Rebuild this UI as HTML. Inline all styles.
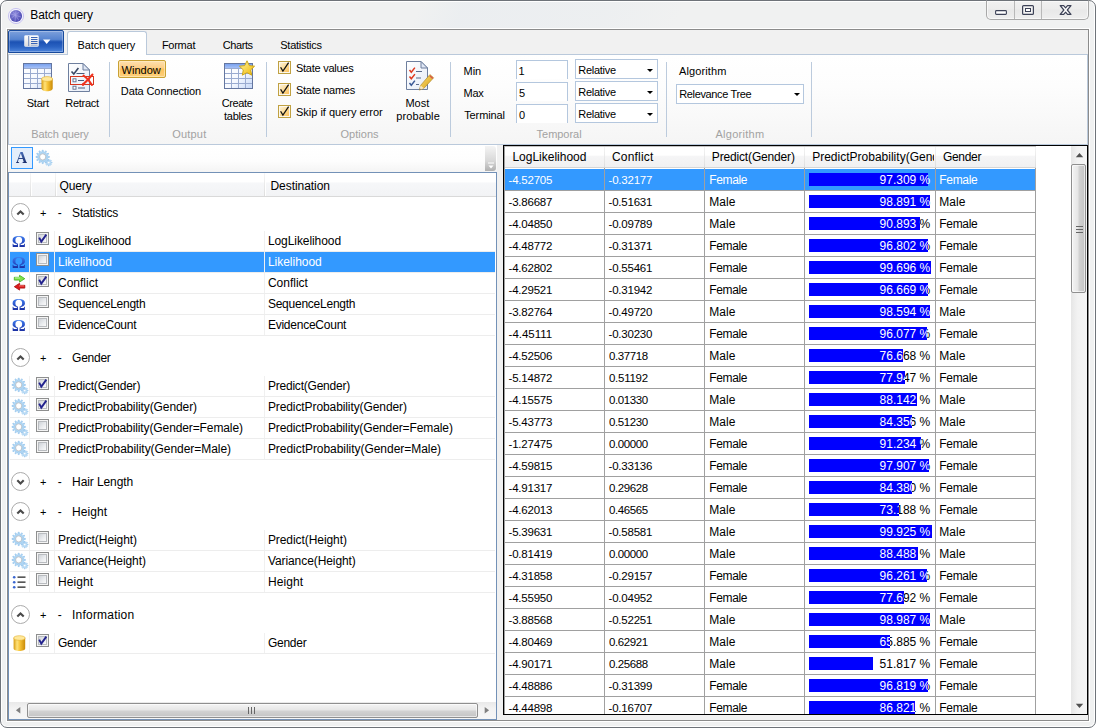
<!DOCTYPE html>
<html lang="en"><head><meta charset="utf-8"><title>Batch query</title>
<style>
html,body{margin:0;padding:0;background:#fff;}
body{width:1096px;height:728px;position:relative;overflow:hidden;font-family:"Liberation Sans",sans-serif;font-size:11px;color:#000;}
.t{position:absolute;white-space:pre;}
.abs{position:absolute;}
svg{position:absolute;overflow:visible;}
.sep{position:absolute;top:62px;height:75px;width:1px;background:#bccbdd;}
.cb{position:absolute;width:11px;height:11px;border:1px solid #8e8f8f;background:linear-gradient(135deg,#d6d9dc 0%,#f4f5f6 60%,#fdfdfd 100%);box-shadow:inset 0 0 0 1px #f4f4f4;}
.cbi{position:absolute;left:1px;top:1px;width:9px;height:9px;box-sizing:border-box;background:linear-gradient(135deg,#cfd3d8 0%,#e9ebee 55%,#fafafa 100%);border:1px solid #b9bcc0;}
.rcb{position:absolute;width:11px;height:11px;border:1px solid #c0a142;background:linear-gradient(135deg,#fdf6e4 0%,#fcd88f 55%,#fbb84c 100%);box-shadow:inset 0 0 0 1px #fdf8ec;}
.tb{position:absolute;background:#fff;border:1px solid #b4c7de;border-bottom:none;box-sizing:border-box;}
.cmb{position:absolute;background:#fff;border:1px solid #b4c7de;box-sizing:border-box;}
.arr{position:absolute;width:0;height:0;border-left:3px solid transparent;border-right:3px solid transparent;border-top:3px solid #000;}
.row{position:absolute;left:10px;width:485px;height:20px;border-bottom:1px solid #ededed;}
.vs{position:absolute;top:0;width:1px;height:20px;background:#f0f0f0;}
.sel{position:absolute;top:0;height:20px;background:#3399ff;}
.gl{position:absolute;background:#a0a0a0;}
.bar{position:absolute;height:13px;background:#0000ff;overflow:hidden;}
.circ{position:absolute;width:17px;height:17px;border:1px solid #ababab;border-radius:50%;background:#fff;}
</style></head><body>

<div class="abs" style="left:0;top:0;width:1094px;height:726px;border:1px solid #6e7379;border-radius:7px;background:#f0f1f1;box-shadow:inset 0 0 0 1px #ffffff;"></div>
<div class="abs" style="left:2px;top:2px;width:1092px;height:27px;background:linear-gradient(115deg,rgba(255,255,255,0) 0%,rgba(255,255,255,0) 38%,rgba(232,236,240,.6) 42%,rgba(232,236,240,.4) 55%,rgba(255,255,255,0) 62%);"></div>
<div style="position:absolute;left:6px;top:28px;width:1082px;height:692px;border:1px solid #fff;"></div>
<div style="position:absolute;left:7px;top:29px;width:1080px;height:690px;border:1px solid #8b8b8b;background:#f1f1f1;"></div>
<svg style="left:8px;top:8px" width="16" height="16" viewBox="0 0 16 16"><defs><radialGradient id="gi" cx="40%" cy="35%" r="70%"><stop offset="0" stop-color="#8f8cdf"/><stop offset="1" stop-color="#4543ad"/></radialGradient></defs>
<circle cx="8" cy="8" r="7.6" fill="#f3f2fd" stroke="#bcb8ee" stroke-width="0.8"/><circle cx="8" cy="8" r="6.1" fill="url(#gi)"/>
<path d="M3 6 L13 9 M5 3.5 L11 12.5 M3.5 10 L11 4 M8 2 L7 14" stroke="#a9a6e6" stroke-width="0.7" fill="none" opacity=".8"/></svg>
<span class="t" style="left:30.30px;top:6.93px;font-size:12px;line-height:16px;color:#000;letter-spacing:-0.141px;text-shadow:0 0 4px #fff,0 0 7px #fff;">Batch query</span>
<div class="abs" style="left:986px;top:0px;width:101px;height:18px;border:1px solid #a8a8a8;border-top:1px solid #6e7379;border-radius:0 0 5px 5px;background:linear-gradient(180deg,#f1f1f1,#ececec 45%,#e8e8e8 50%,#eeeeee);box-shadow:inset 0 0 0 1px rgba(255,255,255,.6);"></div>
<div style="position:absolute;left:1014px;top:1px;width:1px;height:18px;background:#b8b8b8;"></div>
<div style="position:absolute;left:1041px;top:1px;width:1px;height:18px;background:#b8b8b8;"></div>
<svg style="left:994px;top:4px" width="80" height="12" viewBox="0 0 80 12">
<rect x="1.600" y="6.600" width="10.800" height="3.800" rx=".8" fill="#fff" stroke="#3d4257" stroke-width="1.1"/>
<rect x="28.6" y="1.6" width="10.8" height="8.8" rx="1" fill="#f4f4f4" stroke="#3d4257" stroke-width="1.2"/><rect x="31.5" y="4.5" width="5" height="3" fill="#fff" stroke="#3d4257" stroke-width="1"/>
<path d="M66.200 1.600h3.500l1.900 2.300 1.900-2.300h3.500l-3.700 4.400 3.700 4.400h-3.500l-1.900-2.300-1.900 2.300h-3.500l3.700-4.400z" fill="#fff" stroke="#3d4257" stroke-width="1.200" stroke-linejoin="round"/></svg>
<div class="abs" style="left:8px;top:30px;width:54px;height:21px;border:1px solid #184a9c;border-radius:2px 2px 0 0;background:linear-gradient(180deg,#7da0dc 0%,#5684d0 40%,#1c52b4 52%,#2a62c2 75%,#4e86dc 100%);box-shadow:inset 0 0 0 1px rgba(255,255,255,.28);"></div>
<svg style="left:24px;top:35px" width="28" height="13" viewBox="0 0 28 13"><defs><linearGradient id="ab" x1="0" y1="0" x2="0" y2="1"><stop offset="0" stop-color="#fff"/><stop offset="1" stop-color="#dcdcdc"/></linearGradient></defs>
<rect x="0.5" y="0.5" width="14" height="11" rx="1" fill="url(#ab)" stroke="#e8eef8" stroke-width="0.6"/><rect x="4.2" y="1" width="1" height="10" fill="#6a86b8"/>
<path d="M7 2.5h6.500M7 4.500h6.500M7 6.500h6.500M7 8.500h6.500" stroke="#2454b0" stroke-width=".9"/><path d="M7 10.300h6.500" stroke="#7a9ad0" stroke-width=".6"/>
<path d="M19 4.6h7.4l-3.7 4.4z" fill="#fff"/></svg>
<div style="position:absolute;left:8px;top:54px;width:1078px;height:89px;border:1px solid #bac9db;background:linear-gradient(180deg,#ffffff 0%,#fdfdfd 35%,#f5f5f5 100%);"></div>
<div class="abs" style="left:67px;top:31px;width:78px;height:23px;border:1px solid #bac9db;border-bottom:none;border-radius:3px 3px 0 0;background:#fff;"></div>
<span class="t" style="left:77.60px;top:37.86px;font-size:11px;line-height:14px;color:#000;letter-spacing:-0.109px;">Batch query</span>
<span class="t" style="left:161.90px;top:37.86px;font-size:11px;line-height:14px;color:#000;letter-spacing:-0.257px;">Format</span>
<span class="t" style="left:222.80px;top:37.86px;font-size:11px;line-height:14px;color:#000;letter-spacing:-0.418px;">Charts</span>
<span class="t" style="left:280.30px;top:37.86px;font-size:11px;line-height:14px;color:#000;letter-spacing:-0.262px;">Statistics</span>
<div class="sep" style="left:109px"></div>
<div class="sep" style="left:266px"></div>
<div class="sep" style="left:450px"></div>
<div class="sep" style="left:666px"></div>
<div class="sep" style="left:811px"></div>
<span class="t" style="left:31.20px;top:126.86px;font-size:11px;line-height:14px;color:#a2a2a2;letter-spacing:-0.109px;">Batch query</span>
<span class="t" style="left:172.20px;top:126.86px;font-size:11px;line-height:14px;color:#a2a2a2;letter-spacing:0.195px;">Output</span>
<span class="t" style="left:340.40px;top:126.86px;font-size:11px;line-height:14px;color:#a2a2a2;letter-spacing:0.040px;">Options</span>
<span class="t" style="left:536.60px;top:126.86px;font-size:11px;line-height:14px;color:#a2a2a2;letter-spacing:-0.031px;">Temporal</span>
<span class="t" style="left:715.40px;top:126.86px;font-size:11px;line-height:14px;color:#a2a2a2;letter-spacing:0.281px;">Algorithm</span>
<span class="t" style="left:26.70px;top:95.96px;font-size:11px;line-height:14px;color:#000;letter-spacing:-0.207px;">Start</span>
<span class="t" style="left:65.30px;top:95.96px;font-size:11px;line-height:14px;color:#000;letter-spacing:-0.296px;">Retract</span>
<div class="abs" style="left:118px;top:60px;width:46px;height:16px;border:1px solid #c9a133;border-radius:2px;background:linear-gradient(180deg,#fee0b0 0%,#fdcf88 42%,#fdc25c 52%,#fdd07c 100%);box-shadow:inset 0 0 0 1px rgba(255,240,200,.6);"></div>
<span class="t" style="left:121.50px;top:62.86px;font-size:11px;line-height:14px;color:#000;letter-spacing:0.029px;">Window</span>
<span class="t" style="left:120.80px;top:84.06px;font-size:11px;line-height:14px;color:#000;letter-spacing:-0.110px;">Data Connection</span>
<span class="t" style="left:221.80px;top:95.86px;font-size:11px;line-height:14px;color:#000;letter-spacing:-0.405px;">Create</span>
<span class="t" style="left:224.00px;top:108.86px;font-size:11px;line-height:14px;color:#000;letter-spacing:-0.227px;">tables</span>
<div class="rcb" style="left:278px;top:61px"><svg style="left:0;top:0" width="11" height="11" viewBox="0 0 11 11"><path d="M1.6 5.2 L3.9 9 L9.6 0.6" fill="none" stroke="#111" stroke-width="1.25"/></svg></div>
<div class="rcb" style="left:278px;top:83px"><svg style="left:0;top:0" width="11" height="11" viewBox="0 0 11 11"><path d="M1.6 5.2 L3.9 9 L9.6 0.6" fill="none" stroke="#111" stroke-width="1.25"/></svg></div>
<div class="rcb" style="left:278px;top:105px"><svg style="left:0;top:0" width="11" height="11" viewBox="0 0 11 11"><path d="M1.6 5.2 L3.9 9 L9.6 0.6" fill="none" stroke="#111" stroke-width="1.25"/></svg></div>
<span class="t" style="left:296.00px;top:61.16px;font-size:11px;line-height:14px;color:#000;letter-spacing:-0.262px;">State values</span>
<span class="t" style="left:296.00px;top:83.16px;font-size:11px;line-height:14px;color:#000;letter-spacing:-0.261px;">State names</span>
<span class="t" style="left:296.00px;top:105.16px;font-size:11px;line-height:14px;color:#000;letter-spacing:-0.006px;">Skip if query error</span>
<span class="t" style="left:405.40px;top:95.96px;font-size:11px;line-height:14px;color:#000;letter-spacing:0.064px;">Most</span>
<span class="t" style="left:396.30px;top:108.86px;font-size:11px;line-height:14px;color:#000;letter-spacing:0.096px;">probable</span>
<span class="t" style="left:463.60px;top:64.06px;font-size:11px;line-height:14px;color:#000;letter-spacing:-0.045px;">Min</span>
<span class="t" style="left:463.60px;top:86.06px;font-size:11px;line-height:14px;color:#000;letter-spacing:-0.360px;">Max</span>
<span class="t" style="left:464.20px;top:107.76px;font-size:11px;line-height:14px;color:#000;letter-spacing:-0.110px;">Terminal</span>
<div class="tb" style="left:516px;top:60px;width:52px;height:19px"></div>
<span class="t" style="left:518.60px;top:64.36px;font-size:11px;line-height:14px;color:#000;">1</span>
<div class="cmb" style="left:575px;top:59px;width:83px;height:20px"></div>
<span class="t" style="left:578.20px;top:63.16px;font-size:11px;line-height:14px;color:#000;letter-spacing:-0.256px;">Relative</span>
<div class="arr" style="left:647px;top:69px"></div>
<div class="tb" style="left:516px;top:82px;width:52px;height:19px"></div>
<span class="t" style="left:519.00px;top:86.36px;font-size:11px;line-height:14px;color:#000;">5</span>
<div class="cmb" style="left:575px;top:81px;width:83px;height:20px"></div>
<span class="t" style="left:578.20px;top:85.16px;font-size:11px;line-height:14px;color:#000;letter-spacing:-0.256px;">Relative</span>
<div class="arr" style="left:647px;top:91px"></div>
<div class="tb" style="left:516px;top:104px;width:52px;height:19px"></div>
<span class="t" style="left:519.00px;top:108.36px;font-size:11px;line-height:14px;color:#000;">0</span>
<div class="cmb" style="left:575px;top:103px;width:83px;height:20px"></div>
<span class="t" style="left:578.20px;top:107.16px;font-size:11px;line-height:14px;color:#000;letter-spacing:-0.256px;">Relative</span>
<div class="arr" style="left:647px;top:113px"></div>
<span class="t" style="left:679.00px;top:64.26px;font-size:11px;line-height:14px;color:#000;letter-spacing:0.115px;">Algorithm</span>
<div class="cmb" style="left:676px;top:84px;width:128px;height:20px"></div>
<span class="t" style="left:679.20px;top:86.76px;font-size:11px;line-height:14px;color:#000;letter-spacing:-0.346px;">Relevance Tree</span>
<div class="arr" style="left:794px;top:93px"></div>
<svg style="left:0;top:0" width="1096" height="150" viewBox="0 0 1096 150">
<defs>
<linearGradient id="th" x1="0" y1="0" x2="0" y2="1"><stop offset="0" stop-color="#7aa2ee"/><stop offset="1" stop-color="#a4c0f6"/></linearGradient>
<linearGradient id="tc" x1="0" y1="0" x2="1" y2="1"><stop offset="0" stop-color="#ffffff"/><stop offset=".55" stop-color="#f6f9ff"/><stop offset="1" stop-color="#c4d6f6"/></linearGradient>
<linearGradient id="cy" x1="0" y1="0" x2="1" y2="0"><stop offset="0" stop-color="#d79b10"/><stop offset=".3" stop-color="#ffe27a"/><stop offset=".55" stop-color="#f6c236"/><stop offset="1" stop-color="#c98a08"/></linearGradient>
<linearGradient id="dc" x1="0" y1="0" x2="1" y2="1"><stop offset="0" stop-color="#ffffff"/><stop offset="1" stop-color="#e6ecf7"/></linearGradient>
<linearGradient id="st" x1="0" y1="0" x2="1" y2="1"><stop offset="0" stop-color="#fff7a0"/><stop offset="1" stop-color="#f0b400"/></linearGradient>
<linearGradient id="pn" x1="0" y1="0" x2="1" y2="1"><stop offset="0" stop-color="#ffe27a"/><stop offset="1" stop-color="#d49a10"/></linearGradient>
</defs>
<!-- Start: table + cylinder -->
<g>
<rect x="23.5" y="63.5" width="28" height="25" fill="url(#tc)" stroke="#6476a0"/>
<rect x="24" y="64" width="27" height="4" fill="url(#th)"/>
<path d="M24 68.5h27M24 73.5h27M24 78.5h27M24 83.5h27M30.5 68v20M37.5 68v20M44.5 68v20" stroke="#9aabd0" stroke-width="1" fill="none"/>
<path d="M41.5 79v9.5c0 1.6 2.5 2.8 5.6 2.8s5.6-1.2 5.6-2.8V79z" fill="url(#cy)"/>
<ellipse cx="47.1" cy="79" rx="5.6" ry="2.4" fill="#ffe89a" stroke="#e0ae2c" stroke-width=".6"/>
</g>
<!-- Retract: doc + red x -->
<g>
<path d="M68.5 63.5h14.5l6.5 6.5v21.5h-21z" fill="url(#dc)" stroke="#6e7f9e"/>
<path d="M83 63.5v6.5h6.5z" fill="#dfe7f5" stroke="#6e7f9e" stroke-linejoin="round"/>
<path d="M71.5 71.5l2.3 2.6 4.6-6" stroke="#3b4a66" stroke-width="1.6" fill="none"/>
<path d="M76.5 73.5h8" stroke="#4b5c7c" stroke-width="1"/>
<rect x="70.500" y="76.500" width="23" height="8" fill="none" stroke="#d4371f" stroke-width="1"/>
<rect x="73" y="78.8" width="3" height="3" fill="#fff" stroke="#5b6c8c" stroke-width=".9"/>
<path d="M78 80.5h6" stroke="#4b5c7c" stroke-width="1"/>
<rect x="73" y="86.2" width="3" height="3" fill="#fff" stroke="#5b6c8c" stroke-width=".9"/>
<path d="M78 88h7" stroke="#4b5c7c" stroke-width="1"/>
<path d="M83.5 75.5c3 2 6 5 8.5 9.5M92.5 74.5c-3 3.5-6 7-9.5 9.8" stroke="#f0321e" stroke-width="2" fill="none" stroke-linecap="round"/>
<circle cx="83" cy="84.6" r="1.3" fill="#f0321e"/>
</g>
<!-- Create tables: table + star -->
<g>
<rect x="224.5" y="63.5" width="28" height="25" fill="url(#tc)" stroke="#6476a0"/>
<rect x="225" y="64" width="27" height="4" fill="url(#th)"/>
<path d="M225 68.5h27M225 73.5h27M225 78.5h27M225 83.5h27M231.500 68v20M238.5 68v20M245.5 68v20" stroke="#9aabd0" stroke-width="1" fill="none"/>
<path d="M247 60.8l2.3 4.8 5.3.6-3.9 3.7 1 5.3-4.7-2.6-4.7 2.6 1-5.300-3.900-3.700 5.300-.600z" fill="url(#st)" stroke="#c9a210" stroke-width=".9" stroke-linejoin="round"/>
</g>
<!-- Most probable: doc + red checks + pencil -->
<g>
<path d="M406.500 61.5h14.500l6.500 6.500v21.500h-21z" fill="url(#dc)" stroke="#6e7f9e"/>
<path d="M421 61.500v6.500h6.500z" fill="#dfe7f5" stroke="#6e7f9e" stroke-linejoin="round"/>
<path d="M409.5 70l1.800 2.200 3.600-4.600" stroke="#e03a20" stroke-width="1.500" fill="none"/>
<path d="M409.5 76.500l1.800 2.200 3.600-4.600" stroke="#e03a20" stroke-width="1.500" fill="none"/>
<path d="M409.500 83l1.800 2.200 3.600-4.600" stroke="#3b5a96" stroke-width="1.500" fill="none"/>
<path d="M416 71.500h6M416 78h5M416 84.500h3" stroke="#5b6c8c" stroke-width="1"/>
<path d="M429.900 74.600l3.700 3.200-9.700 10.500-4.600 1.800 1.300-4.700z" fill="url(#pn)" stroke="#b08a28" stroke-width=".7" stroke-linejoin="round"/>
<path d="M429.3 76.300l1-1.100 3 2.600-1 1.100z" fill="#d8584a"/>
<path d="M420.600 85.400l-1.300 4.700 4.600-1.800z" fill="#f6e6c4"/><path d="M419.300 90.100l.5-1.700 1.200 1.100z" fill="#444"/>
</g>
</svg>
<div style="position:absolute;left:8px;top:145px;width:489px;height:27px;background:linear-gradient(180deg,#ffffff 0%,#fdfdfd 60%,#f4f4f4 100%);"></div>
<div class="abs" style="left:11px;top:147px;width:20px;height:20px;border:1px solid #3399ff;background:#e4eefb;"></div>
<span class="t" style="left:15.70px;top:147.41px;font-size:16px;line-height:21px;color:transparent;font-family:'Liberation Serif',serif;font-weight:bold;background:linear-gradient(180deg,#4065b0 30%,#1c2f6c 75%);-webkit-background-clip:text;background-clip:text;">A</span>
<div class="abs" style="left:485px;top:146px;width:11px;height:25px;border-radius:0 3px 3px 0;background:linear-gradient(180deg,#f4f4f4 0%,#d8d8d8 60%,#b0b0b0 100%);"></div>
<svg style="left:487px;top:162px" width="8" height="8" viewBox="0 0 8 8"><path d="M1 1h6" stroke="#fff" stroke-width="1"/><path d="M1.5 3.5h5l-2.500 3z" fill="#fff"/></svg>
<svg width="0" height="0" style="left:0;top:0"><defs>
<g id="gear">
<path d="M14.96 12.17L16.08 12.20L16.08 13.00L14.96 13.03L14.60 13.89L15.37 14.70L14.80 15.27L13.99 14.50L13.13 14.86L13.10 15.98L12.30 15.98L12.27 14.86L11.41 14.50L10.60 15.27L10.03 14.70L10.80 13.89L10.44 13.03L9.32 13.00L9.32 12.20L10.44 12.17L10.80 11.31L10.03 10.50L10.60 9.93L11.41 10.70L12.27 10.34L12.30 9.22L13.10 9.22L13.13 10.34L13.99 10.70L14.80 9.93L15.37 10.50L14.60 11.31z" fill="#c2e0f7" stroke="#93c4ec" stroke-width=".6" stroke-linejoin="round"/>
<circle cx="12.700" cy="12.600" r="1.200" fill="#fff" stroke="#9ccaee" stroke-width=".5"/>
<path d="M11.56 6.29L13.38 6.37L13.38 7.43L11.56 7.51L11.22 8.80L12.75 9.78L12.22 10.69L10.60 9.86L9.66 10.80L10.49 12.42L9.58 12.95L8.60 11.42L7.31 11.76L7.23 13.58L6.17 13.58L6.09 11.76L4.80 11.42L3.82 12.95L2.91 12.42L3.74 10.80L2.80 9.86L1.18 10.69L0.65 9.78L2.18 8.80L1.84 7.51L0.02 7.43L0.02 6.37L1.84 6.29L2.18 5.00L0.65 4.02L1.18 3.11L2.80 3.94L3.74 3.00L2.91 1.38L3.82 0.85L4.80 2.38L6.09 2.04L6.17 0.22L7.23 0.22L7.31 2.04L8.60 2.38L9.58 0.85L10.49 1.38L9.66 3.00L10.60 3.94L12.22 3.11L12.75 4.02L11.22 5.00z" fill="#bcdcf6" stroke="#8fc2eb" stroke-width=".7" stroke-linejoin="round"/>
<circle cx="6.700" cy="6.900" r="4.100" fill="none" stroke="#a6d2f3" stroke-width=".9"/>
<circle cx="6.700" cy="6.900" r="3.100" fill="#fff" stroke="#a8adb4" stroke-width=".7"/>
</g>
<linearGradient id="cy2" x1="0" y1="0" x2="1" y2="0"><stop offset="0" stop-color="#d79b10"/><stop offset=".3" stop-color="#ffe27a"/><stop offset=".55" stop-color="#f6c236"/><stop offset="1" stop-color="#c98a08"/></linearGradient>
<linearGradient id="om" x1="0" y1="0" x2="0" y2="1"><stop offset="0" stop-color="#4f86ee"/><stop offset="1" stop-color="#1d3fa4"/></linearGradient>
</defs></svg>
<svg style="left:36px;top:150px" width="16" height="16" viewBox="0 0 16 16"><use href="#gear"/></svg>
<div style="position:absolute;left:8px;top:172px;width:487px;height:546px;border:1px solid #7391b7;background:#fff;"></div>
<div style="position:absolute;left:9px;top:173px;width:487px;height:23px;background:linear-gradient(180deg,#ffffff 0%,#ffffff 38%,#f6f7f9 44%,#f2f3f5 100%);border-bottom:1px solid #d9d9d9;"></div>
<div style="position:absolute;left:30px;top:173px;width:1px;height:23px;background:linear-gradient(180deg,#f6f6f6,#dedede);"></div>
<div style="position:absolute;left:31px;top:173px;width:1px;height:23px;background:#fff;"></div>
<div style="position:absolute;left:55px;top:173px;width:1px;height:23px;background:linear-gradient(180deg,#f6f6f6,#dedede);"></div>
<div style="position:absolute;left:56px;top:173px;width:1px;height:23px;background:#fff;"></div>
<div style="position:absolute;left:264px;top:173px;width:1px;height:23px;background:linear-gradient(180deg,#f6f6f6,#dedede);"></div>
<div style="position:absolute;left:265px;top:173px;width:1px;height:23px;background:#fff;"></div>
<span class="t" style="left:59.40px;top:177.83px;font-size:12px;line-height:16px;color:#000;letter-spacing:-0.097px;">Query</span>
<span class="t" style="left:270.50px;top:177.83px;font-size:12px;line-height:16px;color:#000;letter-spacing:-0.050px;">Destination</span>
<div class="circ" style="left:11px;top:202.5px"></div>
<svg style="left:11px;top:202.5px" width="19" height="19" viewBox="0 0 19 19"><path d="M6.300 11.600 L9.500 8.400 L12.700 11.600" fill="none" stroke="#4a4a4a" stroke-width="2.100"/></svg>
<span class="t" style="left:39.90px;top:206.26px;font-size:11px;line-height:14px;color:#000;">+</span>
<span class="t" style="left:57.70px;top:204.63px;font-size:12px;line-height:16px;color:#000;">-</span>
<span class="t" style="left:72.10px;top:204.83px;font-size:12px;line-height:16px;color:#000;letter-spacing:-0.212px;">Statistics</span>
<div class="row" style="top:231px">
<div class="vs" style="left:19px"></div><div class="vs" style="left:44px"></div><div class="vs" style="left:254px"></div></div>
<span class="t" style="left:11.80px;top:229.52px;font-size:17.5px;line-height:23px;color:transparent;font-family:'Liberation Serif',serif;font-weight:bold;background:linear-gradient(180deg,#3f7cec 25%,#2a55cc 50%,#18289a 78%);-webkit-background-clip:text;background-clip:text;">Ω</span>
<div class="cb" style="left:36px;top:232px"><div class="cbi"></div><svg style="left:0;top:0" width="11" height="11" viewBox="0 0 11 11"><path d="M2.200 4.600 L4.300 8.600 L9.300 1.600" fill="none" stroke="#23238e" stroke-width="1.900"/></svg></div>
<span class="t" style="left:58.00px;top:232.63px;font-size:12px;line-height:16px;color:#000;letter-spacing:-0.074px;">LogLikelihood</span>
<span class="t" style="left:267.90px;top:232.63px;font-size:12px;line-height:16px;color:#000;letter-spacing:-0.074px;">LogLikelihood</span>
<div class="row" style="top:252px">
<div class="sel" style="left:0px;width:19px"></div><div class="sel" style="left:20px;width:24px"></div><div class="sel" style="left:45px;width:209px"></div><div class="sel" style="left:255px;width:230px"></div>
<div class="vs" style="left:19px"></div><div class="vs" style="left:44px"></div><div class="vs" style="left:254px"></div></div>
<span class="t" style="left:11.80px;top:250.52px;font-size:17.5px;line-height:23px;color:transparent;font-family:'Liberation Serif',serif;font-weight:bold;background:linear-gradient(180deg,#3f7cec 25%,#2a55cc 50%,#18289a 78%);-webkit-background-clip:text;background-clip:text;">Ω</span>
<div class="cb" style="left:36px;top:253px"><div class="cbi"></div></div>
<span class="t" style="left:58.00px;top:253.63px;font-size:12px;line-height:16px;color:#fff;letter-spacing:-0.015px;">Likelihood</span>
<span class="t" style="left:267.90px;top:253.63px;font-size:12px;line-height:16px;color:#fff;letter-spacing:-0.015px;">Likelihood</span>
<div class="row" style="top:273px">
<div class="vs" style="left:19px"></div><div class="vs" style="left:44px"></div><div class="vs" style="left:254px"></div></div>
<svg style="left:11px;top:273.3px" width="18" height="18" viewBox="0 0 18 18"><path d="M3.300 4.300h5.200v-2l5.300 3.400-5.300 3.400v-2h-5.200z" fill="#7fe04a" stroke="#3fb01c" stroke-width=".8" stroke-linejoin="round"/><path d="M4 4.900h5" stroke="#d8ffc0" stroke-width=".8"/><path d="M13.800 12.300h-5.200v-2l-5.300 3.400 5.300 3.400v-2h5.200z" fill="#dc1c1c" stroke="#a80c0c" stroke-width=".8" stroke-linejoin="round"/><path d="M8 12.900h5" stroke="#ff8a80" stroke-width=".8"/></svg>
<div class="cb" style="left:36px;top:274px"><div class="cbi"></div><svg style="left:0;top:0" width="11" height="11" viewBox="0 0 11 11"><path d="M2.200 4.600 L4.300 8.600 L9.300 1.600" fill="none" stroke="#23238e" stroke-width="1.900"/></svg></div>
<span class="t" style="left:58.00px;top:274.63px;font-size:12px;line-height:16px;color:#000;letter-spacing:-0.002px;">Conflict</span>
<span class="t" style="left:267.90px;top:274.63px;font-size:12px;line-height:16px;color:#000;letter-spacing:-0.002px;">Conflict</span>
<div class="row" style="top:294px">
<div class="vs" style="left:19px"></div><div class="vs" style="left:44px"></div><div class="vs" style="left:254px"></div></div>
<span class="t" style="left:11.80px;top:292.52px;font-size:17.5px;line-height:23px;color:transparent;font-family:'Liberation Serif',serif;font-weight:bold;background:linear-gradient(180deg,#3f7cec 25%,#2a55cc 50%,#18289a 78%);-webkit-background-clip:text;background-clip:text;">Ω</span>
<div class="cb" style="left:36px;top:295px"><div class="cbi"></div></div>
<span class="t" style="left:58.00px;top:295.63px;font-size:12px;line-height:16px;color:#000;letter-spacing:-0.239px;">SequenceLength</span>
<span class="t" style="left:267.90px;top:295.63px;font-size:12px;line-height:16px;color:#000;letter-spacing:-0.239px;">SequenceLength</span>
<div class="row" style="top:315px">
<div class="vs" style="left:19px"></div><div class="vs" style="left:44px"></div><div class="vs" style="left:254px"></div></div>
<span class="t" style="left:11.80px;top:313.52px;font-size:17.5px;line-height:23px;color:transparent;font-family:'Liberation Serif',serif;font-weight:bold;background:linear-gradient(180deg,#3f7cec 25%,#2a55cc 50%,#18289a 78%);-webkit-background-clip:text;background-clip:text;">Ω</span>
<div class="cb" style="left:36px;top:316px"><div class="cbi"></div></div>
<span class="t" style="left:58.00px;top:316.63px;font-size:12px;line-height:16px;color:#000;letter-spacing:-0.238px;">EvidenceCount</span>
<span class="t" style="left:267.90px;top:316.63px;font-size:12px;line-height:16px;color:#000;letter-spacing:-0.238px;">EvidenceCount</span>
<div class="circ" style="left:11px;top:347.5px"></div>
<svg style="left:11px;top:347.5px" width="19" height="19" viewBox="0 0 19 19"><path d="M6.300 11.600 L9.500 8.400 L12.700 11.600" fill="none" stroke="#4a4a4a" stroke-width="2.100"/></svg>
<span class="t" style="left:39.90px;top:351.26px;font-size:11px;line-height:14px;color:#000;">+</span>
<span class="t" style="left:57.70px;top:349.63px;font-size:12px;line-height:16px;color:#000;">-</span>
<span class="t" style="left:72.10px;top:349.83px;font-size:12px;line-height:16px;color:#000;letter-spacing:-0.255px;">Gender</span>
<div class="row" style="top:376px">
<div class="vs" style="left:19px"></div><div class="vs" style="left:44px"></div><div class="vs" style="left:254px"></div></div>
<svg style="left:12px;top:378px" width="16" height="16" viewBox="0 0 16 16"><use href="#gear"/></svg>
<div class="cb" style="left:36px;top:377px"><div class="cbi"></div><svg style="left:0;top:0" width="11" height="11" viewBox="0 0 11 11"><path d="M2.200 4.600 L4.300 8.600 L9.300 1.600" fill="none" stroke="#23238e" stroke-width="1.900"/></svg></div>
<span class="t" style="left:58.00px;top:377.63px;font-size:12px;line-height:16px;color:#000;letter-spacing:-0.212px;">Predict(Gender)</span>
<span class="t" style="left:267.90px;top:377.63px;font-size:12px;line-height:16px;color:#000;letter-spacing:-0.212px;">Predict(Gender)</span>
<div class="row" style="top:397px">
<div class="vs" style="left:19px"></div><div class="vs" style="left:44px"></div><div class="vs" style="left:254px"></div></div>
<svg style="left:12px;top:399px" width="16" height="16" viewBox="0 0 16 16"><use href="#gear"/></svg>
<div class="cb" style="left:36px;top:398px"><div class="cbi"></div><svg style="left:0;top:0" width="11" height="11" viewBox="0 0 11 11"><path d="M2.200 4.600 L4.300 8.600 L9.300 1.600" fill="none" stroke="#23238e" stroke-width="1.900"/></svg></div>
<span class="t" style="left:58.00px;top:398.63px;font-size:12px;line-height:16px;color:#000;letter-spacing:-0.093px;">PredictProbability(Gender)</span>
<span class="t" style="left:267.90px;top:398.63px;font-size:12px;line-height:16px;color:#000;letter-spacing:-0.093px;">PredictProbability(Gender)</span>
<div class="row" style="top:418px">
<div class="vs" style="left:19px"></div><div class="vs" style="left:44px"></div><div class="vs" style="left:254px"></div></div>
<svg style="left:12px;top:420px" width="16" height="16" viewBox="0 0 16 16"><use href="#gear"/></svg>
<div class="cb" style="left:36px;top:419px"><div class="cbi"></div></div>
<span class="t" style="left:58.00px;top:419.63px;font-size:12px;line-height:16px;color:#000;letter-spacing:-0.107px;">PredictProbability(Gender=Female)</span>
<span class="t" style="left:267.90px;top:419.63px;font-size:12px;line-height:16px;color:#000;letter-spacing:-0.107px;">PredictProbability(Gender=Female)</span>
<div class="row" style="top:439px">
<div class="vs" style="left:19px"></div><div class="vs" style="left:44px"></div><div class="vs" style="left:254px"></div></div>
<svg style="left:12px;top:441px" width="16" height="16" viewBox="0 0 16 16"><use href="#gear"/></svg>
<div class="cb" style="left:36px;top:440px"><div class="cbi"></div></div>
<span class="t" style="left:58.00px;top:440.63px;font-size:12px;line-height:16px;color:#000;letter-spacing:-0.043px;">PredictProbability(Gender=Male)</span>
<span class="t" style="left:267.90px;top:440.63px;font-size:12px;line-height:16px;color:#000;letter-spacing:-0.043px;">PredictProbability(Gender=Male)</span>
<div class="circ" style="left:11px;top:471.5px"></div>
<svg style="left:11px;top:471.5px" width="19" height="19" viewBox="0 0 19 19"><path d="M6.300 8.200 L9.500 11.400 L12.700 8.200" fill="none" stroke="#4a4a4a" stroke-width="2.100"/></svg>
<span class="t" style="left:39.90px;top:475.26px;font-size:11px;line-height:14px;color:#000;">+</span>
<span class="t" style="left:57.70px;top:473.63px;font-size:12px;line-height:16px;color:#000;">-</span>
<span class="t" style="left:72.10px;top:473.83px;font-size:12px;line-height:16px;color:#000;letter-spacing:-0.095px;">Hair Length</span>
<div class="circ" style="left:11px;top:501.5px"></div>
<svg style="left:11px;top:501.5px" width="19" height="19" viewBox="0 0 19 19"><path d="M6.300 11.600 L9.500 8.400 L12.700 11.600" fill="none" stroke="#4a4a4a" stroke-width="2.100"/></svg>
<span class="t" style="left:39.90px;top:505.26px;font-size:11px;line-height:14px;color:#000;">+</span>
<span class="t" style="left:57.70px;top:503.63px;font-size:12px;line-height:16px;color:#000;">-</span>
<span class="t" style="left:72.10px;top:503.83px;font-size:12px;line-height:16px;color:#000;letter-spacing:0.085px;">Height</span>
<div class="row" style="top:530px">
<div class="vs" style="left:19px"></div><div class="vs" style="left:44px"></div><div class="vs" style="left:254px"></div></div>
<svg style="left:12px;top:532px" width="16" height="16" viewBox="0 0 16 16"><use href="#gear"/></svg>
<div class="cb" style="left:36px;top:531px"><div class="cbi"></div></div>
<span class="t" style="left:58.00px;top:531.63px;font-size:12px;line-height:16px;color:#000;letter-spacing:-0.069px;">Predict(Height)</span>
<span class="t" style="left:267.90px;top:531.63px;font-size:12px;line-height:16px;color:#000;letter-spacing:-0.069px;">Predict(Height)</span>
<div class="row" style="top:551px">
<div class="vs" style="left:19px"></div><div class="vs" style="left:44px"></div><div class="vs" style="left:254px"></div></div>
<svg style="left:12px;top:553px" width="16" height="16" viewBox="0 0 16 16"><use href="#gear"/></svg>
<div class="cb" style="left:36px;top:552px"><div class="cbi"></div></div>
<span class="t" style="left:58.00px;top:552.63px;font-size:12px;line-height:16px;color:#000;letter-spacing:-0.079px;">Variance(Height)</span>
<span class="t" style="left:267.90px;top:552.63px;font-size:12px;line-height:16px;color:#000;letter-spacing:-0.079px;">Variance(Height)</span>
<div class="row" style="top:572px">
<div class="vs" style="left:19px"></div><div class="vs" style="left:44px"></div><div class="vs" style="left:254px"></div></div>
<svg style="left:12px;top:573px" width="16" height="18" viewBox="0 0 16 18"><g fill="#3a66d0"><circle cx="2.200" cy="4.200" r="1.300"/><circle cx="2.200" cy="9.200" r="1.300"/><circle cx="2.200" cy="14.200" r="1.300"/></g><path d="M5.500 4.200h8M5.500 9.200h8M5.500 14.200h8" stroke="#222" stroke-width="1.300"/></svg>
<div class="cb" style="left:36px;top:573px"><div class="cbi"></div></div>
<span class="t" style="left:58.00px;top:573.63px;font-size:12px;line-height:16px;color:#000;letter-spacing:0.085px;">Height</span>
<span class="t" style="left:267.90px;top:573.63px;font-size:12px;line-height:16px;color:#000;letter-spacing:0.085px;">Height</span>
<div class="circ" style="left:11px;top:604.5px"></div>
<svg style="left:11px;top:604.5px" width="19" height="19" viewBox="0 0 19 19"><path d="M6.300 11.600 L9.500 8.400 L12.700 11.600" fill="none" stroke="#4a4a4a" stroke-width="2.100"/></svg>
<span class="t" style="left:39.90px;top:608.26px;font-size:11px;line-height:14px;color:#000;">+</span>
<span class="t" style="left:57.70px;top:606.63px;font-size:12px;line-height:16px;color:#000;">-</span>
<span class="t" style="left:72.10px;top:606.83px;font-size:12px;line-height:16px;color:#000;letter-spacing:0.197px;">Information</span>
<div class="row" style="top:633px">
<div class="vs" style="left:19px"></div><div class="vs" style="left:44px"></div><div class="vs" style="left:254px"></div></div>
<svg style="left:13px;top:635px" width="13" height="17" viewBox="0 0 13 17"><path d="M.6 3v10.500c0 1.400 2.600 2.500 5.800 2.500s5.800-1.100 5.800-2.500V3z" fill="url(#cy2)"/><ellipse cx="6.400" cy="3" rx="5.800" ry="2.300" fill="#ffe89a" stroke="#e0ae2c" stroke-width=".6"/></svg>
<div class="cb" style="left:36px;top:634px"><div class="cbi"></div><svg style="left:0;top:0" width="11" height="11" viewBox="0 0 11 11"><path d="M2.200 4.600 L4.300 8.600 L9.300 1.600" fill="none" stroke="#23238e" stroke-width="1.900"/></svg></div>
<span class="t" style="left:58.00px;top:634.63px;font-size:12px;line-height:16px;color:#000;letter-spacing:-0.255px;">Gender</span>
<span class="t" style="left:267.90px;top:634.63px;font-size:12px;line-height:16px;color:#000;letter-spacing:-0.255px;">Gender</span>
<div style="position:absolute;left:9px;top:702px;width:487px;height:17px;background:linear-gradient(180deg,#e9e9e9,#f3f3f3 40%,#f6f6f6);"></div>
<div class="abs" style="left:27px;top:703px;width:449px;height:13px;border:1px solid #8f8f8f;border-radius:2px;background:linear-gradient(180deg,#f4f4f4 0%,#e6e6e6 45%,#d2d2d2 55%,#c4c4c4 100%);box-shadow:inset 0 0 0 1px rgba(255,255,255,.6);"></div>
<svg style="left:9px;top:702px" width="487" height="17" viewBox="0 0 487 17"><path d="M11.300 5v6.600l-4.400-3.300z" fill="#808080"/><path d="M475.700 5v6.600l4.400-3.300z" fill="#808080"/><path d="M239.500 5v7M242.500 5v7M245.500 5v7" stroke="#666" stroke-width="1"/></svg>
<div style="position:absolute;left:503px;top:145px;width:583px;height:568px;border:1px solid #000;background:#fff;"></div>
<div style="position:absolute;left:504px;top:146px;width:1px;height:568px;background:#a0a0a0;"></div>
<div style="position:absolute;left:505px;top:146px;width:531px;height:1px;background:#c4c4c4;"></div>
<div style="position:absolute;left:505px;top:147px;width:531px;height:20px;background:linear-gradient(180deg,#ffffff 0%,#ffffff 40%,#f5f5f6 48%,#f0f0f1 100%);border-bottom:1px solid #d5d5d5;"></div>
<div style="position:absolute;left:604px;top:147px;width:1px;height:20px;background:linear-gradient(180deg,#f4f4f4,#dedede);"></div>
<div style="position:absolute;left:604px;top:168px;width:1px;height:546px;background:#a0a0a0;"></div>
<div style="position:absolute;left:704px;top:147px;width:1px;height:20px;background:linear-gradient(180deg,#f4f4f4,#dedede);"></div>
<div style="position:absolute;left:704px;top:168px;width:1px;height:546px;background:#a0a0a0;"></div>
<div style="position:absolute;left:804px;top:147px;width:1px;height:20px;background:linear-gradient(180deg,#f4f4f4,#dedede);"></div>
<div style="position:absolute;left:804px;top:168px;width:1px;height:546px;background:#a0a0a0;"></div>
<div style="position:absolute;left:935px;top:147px;width:1px;height:20px;background:linear-gradient(180deg,#f4f4f4,#dedede);"></div>
<div style="position:absolute;left:935px;top:168px;width:1px;height:546px;background:#a0a0a0;"></div>
<div style="position:absolute;left:1035px;top:147px;width:1px;height:20px;background:linear-gradient(180deg,#f4f4f4,#dedede);"></div>
<div style="position:absolute;left:1035px;top:168px;width:1px;height:546px;background:#a0a0a0;"></div>
<span class="t" style="left:512.40px;top:149.43px;font-size:12px;line-height:16px;color:#000;letter-spacing:-0.005px;">LogLikelihood</span>
<span class="t" style="left:612.00px;top:149.43px;font-size:12px;line-height:16px;color:#000;letter-spacing:0.173px;">Conflict</span>
<span class="t" style="left:711.80px;top:149.43px;font-size:12px;line-height:16px;color:#000;letter-spacing:-0.158px;">Predict(Gender)</span>
<div class="abs" style="left:805px;top:146px;width:129px;height:21px;overflow:hidden">
<span class="t" style="left:7.20px;top:3.43px;font-size:12px;line-height:16px;color:#000;letter-spacing:0.004px;">PredictProbability(Gender)</span>
</div>
<span class="t" style="left:942.90px;top:149.43px;font-size:12px;line-height:16px;color:#000;letter-spacing:-0.305px;">Gender</span>
<div style="position:absolute;left:505px;top:169px;width:99px;height:21px;background:#3399ff;"></div>
<div style="position:absolute;left:605px;top:169px;width:99px;height:21px;background:#3399ff;"></div>
<div style="position:absolute;left:705px;top:169px;width:99px;height:21px;background:#3399ff;"></div>
<div style="position:absolute;left:805px;top:169px;width:130px;height:21px;background:#3399ff;"></div>
<div style="position:absolute;left:936px;top:169px;width:99px;height:21px;background:#3399ff;"></div>
<div style="position:absolute;left:505px;top:190px;width:531px;height:1px;background:#a0a0a0;"></div>
<span class="t" style="left:508.60px;top:172.90px;font-size:11.5px;line-height:15px;color:#fff;letter-spacing:-0.226px;">-4.52705</span>
<span class="t" style="left:608.60px;top:172.90px;font-size:11.5px;line-height:15px;color:#fff;letter-spacing:-0.226px;">-0.32177</span>
<span class="t" style="left:709.20px;top:172.23px;font-size:12px;line-height:16px;color:#fff;letter-spacing:-0.336px;">Female</span>
<span class="t" style="left:939.30px;top:172.23px;font-size:12px;line-height:16px;color:#fff;letter-spacing:-0.336px;">Female</span>
<span class="t" style="left:879.59px;top:172.23px;font-size:12px;line-height:16px;color:#fff;">97.309 %</span>
<div class="bar" style="left:809px;top:173px;width:119.3px">
<span class="t" style="left:70.59px;top:-0.77px;font-size:12px;line-height:16px;color:#fff;">97.309 %</span>
</div>
<div style="position:absolute;left:505px;top:212px;width:531px;height:1px;background:#a0a0a0;"></div>
<span class="t" style="left:508.60px;top:194.90px;font-size:11.5px;line-height:15px;color:#000;letter-spacing:-0.226px;">-3.86687</span>
<span class="t" style="left:608.60px;top:194.90px;font-size:11.5px;line-height:15px;color:#000;letter-spacing:-0.226px;">-0.51631</span>
<span class="t" style="left:709.20px;top:194.23px;font-size:12px;line-height:16px;color:#000;letter-spacing:0.046px;">Male</span>
<span class="t" style="left:939.30px;top:194.23px;font-size:12px;line-height:16px;color:#000;letter-spacing:0.046px;">Male</span>
<span class="t" style="left:879.59px;top:194.23px;font-size:12px;line-height:16px;color:#000;">98.891 %</span>
<div class="bar" style="left:809px;top:195px;width:121.2px">
<span class="t" style="left:70.59px;top:-0.77px;font-size:12px;line-height:16px;color:#fff;">98.891 %</span>
</div>
<div style="position:absolute;left:505px;top:234px;width:531px;height:1px;background:#a0a0a0;"></div>
<span class="t" style="left:508.60px;top:216.90px;font-size:11.5px;line-height:15px;color:#000;letter-spacing:-0.226px;">-4.04850</span>
<span class="t" style="left:608.60px;top:216.90px;font-size:11.5px;line-height:15px;color:#000;letter-spacing:-0.226px;">-0.09789</span>
<span class="t" style="left:709.20px;top:216.23px;font-size:12px;line-height:16px;color:#000;letter-spacing:0.046px;">Male</span>
<span class="t" style="left:939.30px;top:216.23px;font-size:12px;line-height:16px;color:#000;letter-spacing:-0.336px;">Female</span>
<span class="t" style="left:879.59px;top:216.23px;font-size:12px;line-height:16px;color:#000;">90.893 %</span>
<div class="bar" style="left:809px;top:217px;width:111.4px">
<span class="t" style="left:70.59px;top:-0.77px;font-size:12px;line-height:16px;color:#fff;">90.893 %</span>
</div>
<div style="position:absolute;left:505px;top:256px;width:531px;height:1px;background:#a0a0a0;"></div>
<span class="t" style="left:508.60px;top:238.90px;font-size:11.5px;line-height:15px;color:#000;letter-spacing:-0.226px;">-4.48772</span>
<span class="t" style="left:608.60px;top:238.90px;font-size:11.5px;line-height:15px;color:#000;letter-spacing:-0.226px;">-0.31371</span>
<span class="t" style="left:709.20px;top:238.23px;font-size:12px;line-height:16px;color:#000;letter-spacing:-0.336px;">Female</span>
<span class="t" style="left:939.30px;top:238.23px;font-size:12px;line-height:16px;color:#000;letter-spacing:-0.336px;">Female</span>
<span class="t" style="left:879.59px;top:238.23px;font-size:12px;line-height:16px;color:#000;">96.802 %</span>
<div class="bar" style="left:809px;top:239px;width:118.7px">
<span class="t" style="left:70.59px;top:-0.77px;font-size:12px;line-height:16px;color:#fff;">96.802 %</span>
</div>
<div style="position:absolute;left:505px;top:278px;width:531px;height:1px;background:#a0a0a0;"></div>
<span class="t" style="left:508.60px;top:260.90px;font-size:11.5px;line-height:15px;color:#000;letter-spacing:-0.226px;">-4.62802</span>
<span class="t" style="left:608.60px;top:260.90px;font-size:11.5px;line-height:15px;color:#000;letter-spacing:-0.226px;">-0.55461</span>
<span class="t" style="left:709.20px;top:260.23px;font-size:12px;line-height:16px;color:#000;letter-spacing:-0.336px;">Female</span>
<span class="t" style="left:939.30px;top:260.23px;font-size:12px;line-height:16px;color:#000;letter-spacing:-0.336px;">Female</span>
<span class="t" style="left:879.59px;top:260.23px;font-size:12px;line-height:16px;color:#000;">99.696 %</span>
<div class="bar" style="left:809px;top:261px;width:122.2px">
<span class="t" style="left:70.59px;top:-0.77px;font-size:12px;line-height:16px;color:#fff;">99.696 %</span>
</div>
<div style="position:absolute;left:505px;top:300px;width:531px;height:1px;background:#a0a0a0;"></div>
<span class="t" style="left:508.60px;top:282.90px;font-size:11.5px;line-height:15px;color:#000;letter-spacing:-0.226px;">-4.29521</span>
<span class="t" style="left:608.60px;top:282.90px;font-size:11.5px;line-height:15px;color:#000;letter-spacing:-0.226px;">-0.31942</span>
<span class="t" style="left:709.20px;top:282.23px;font-size:12px;line-height:16px;color:#000;letter-spacing:-0.336px;">Female</span>
<span class="t" style="left:939.30px;top:282.23px;font-size:12px;line-height:16px;color:#000;letter-spacing:-0.336px;">Female</span>
<span class="t" style="left:879.59px;top:282.23px;font-size:12px;line-height:16px;color:#000;">96.669 %</span>
<div class="bar" style="left:809px;top:283px;width:118.5px">
<span class="t" style="left:70.59px;top:-0.77px;font-size:12px;line-height:16px;color:#fff;">96.669 %</span>
</div>
<div style="position:absolute;left:505px;top:322px;width:531px;height:1px;background:#a0a0a0;"></div>
<span class="t" style="left:508.60px;top:304.90px;font-size:11.5px;line-height:15px;color:#000;letter-spacing:-0.226px;">-3.82764</span>
<span class="t" style="left:608.60px;top:304.90px;font-size:11.5px;line-height:15px;color:#000;letter-spacing:-0.226px;">-0.49720</span>
<span class="t" style="left:709.20px;top:304.23px;font-size:12px;line-height:16px;color:#000;letter-spacing:0.046px;">Male</span>
<span class="t" style="left:939.30px;top:304.23px;font-size:12px;line-height:16px;color:#000;letter-spacing:0.046px;">Male</span>
<span class="t" style="left:879.59px;top:304.23px;font-size:12px;line-height:16px;color:#000;">98.594 %</span>
<div class="bar" style="left:809px;top:305px;width:120.9px">
<span class="t" style="left:70.59px;top:-0.77px;font-size:12px;line-height:16px;color:#fff;">98.594 %</span>
</div>
<div style="position:absolute;left:505px;top:344px;width:531px;height:1px;background:#a0a0a0;"></div>
<span class="t" style="left:508.60px;top:326.90px;font-size:11.5px;line-height:15px;color:#000;letter-spacing:-0.013px;">-4.45111</span>
<span class="t" style="left:608.60px;top:326.90px;font-size:11.5px;line-height:15px;color:#000;letter-spacing:-0.226px;">-0.30230</span>
<span class="t" style="left:709.20px;top:326.23px;font-size:12px;line-height:16px;color:#000;letter-spacing:-0.336px;">Female</span>
<span class="t" style="left:939.30px;top:326.23px;font-size:12px;line-height:16px;color:#000;letter-spacing:-0.336px;">Female</span>
<span class="t" style="left:879.59px;top:326.23px;font-size:12px;line-height:16px;color:#000;">96.077 %</span>
<div class="bar" style="left:809px;top:327px;width:117.8px">
<span class="t" style="left:70.59px;top:-0.77px;font-size:12px;line-height:16px;color:#fff;">96.077 %</span>
</div>
<div style="position:absolute;left:505px;top:366px;width:531px;height:1px;background:#a0a0a0;"></div>
<span class="t" style="left:508.60px;top:348.90px;font-size:11.5px;line-height:15px;color:#000;letter-spacing:-0.226px;">-4.52506</span>
<span class="t" style="left:608.90px;top:348.90px;font-size:11.5px;line-height:15px;color:#000;letter-spacing:-0.368px;">0.37718</span>
<span class="t" style="left:709.20px;top:348.23px;font-size:12px;line-height:16px;color:#000;letter-spacing:0.046px;">Male</span>
<span class="t" style="left:939.30px;top:348.23px;font-size:12px;line-height:16px;color:#000;letter-spacing:0.046px;">Male</span>
<span class="t" style="left:879.59px;top:348.23px;font-size:12px;line-height:16px;color:#000;">76.668 %</span>
<div class="bar" style="left:809px;top:349px;width:94.0px">
<span class="t" style="left:70.59px;top:-0.77px;font-size:12px;line-height:16px;color:#fff;">76.668 %</span>
</div>
<div style="position:absolute;left:505px;top:388px;width:531px;height:1px;background:#a0a0a0;"></div>
<span class="t" style="left:508.60px;top:370.90px;font-size:11.5px;line-height:15px;color:#000;letter-spacing:-0.226px;">-5.14872</span>
<span class="t" style="left:608.90px;top:370.90px;font-size:11.5px;line-height:15px;color:#000;letter-spacing:-0.246px;">0.51192</span>
<span class="t" style="left:709.20px;top:370.23px;font-size:12px;line-height:16px;color:#000;letter-spacing:-0.336px;">Female</span>
<span class="t" style="left:939.30px;top:370.23px;font-size:12px;line-height:16px;color:#000;letter-spacing:-0.336px;">Female</span>
<span class="t" style="left:879.59px;top:370.23px;font-size:12px;line-height:16px;color:#000;">77.947 %</span>
<div class="bar" style="left:809px;top:371px;width:95.6px">
<span class="t" style="left:70.59px;top:-0.77px;font-size:12px;line-height:16px;color:#fff;">77.947 %</span>
</div>
<div style="position:absolute;left:505px;top:410px;width:531px;height:1px;background:#a0a0a0;"></div>
<span class="t" style="left:508.60px;top:392.90px;font-size:11.5px;line-height:15px;color:#000;letter-spacing:-0.226px;">-4.15575</span>
<span class="t" style="left:608.90px;top:392.90px;font-size:11.5px;line-height:15px;color:#000;letter-spacing:-0.368px;">0.01330</span>
<span class="t" style="left:709.20px;top:392.23px;font-size:12px;line-height:16px;color:#000;letter-spacing:0.046px;">Male</span>
<span class="t" style="left:939.30px;top:392.23px;font-size:12px;line-height:16px;color:#000;letter-spacing:0.046px;">Male</span>
<span class="t" style="left:879.59px;top:392.23px;font-size:12px;line-height:16px;color:#000;">88.142 %</span>
<div class="bar" style="left:809px;top:393px;width:108.1px">
<span class="t" style="left:70.59px;top:-0.77px;font-size:12px;line-height:16px;color:#fff;">88.142 %</span>
</div>
<div style="position:absolute;left:505px;top:432px;width:531px;height:1px;background:#a0a0a0;"></div>
<span class="t" style="left:508.60px;top:414.90px;font-size:11.5px;line-height:15px;color:#000;letter-spacing:-0.226px;">-5.43773</span>
<span class="t" style="left:608.90px;top:414.90px;font-size:11.5px;line-height:15px;color:#000;letter-spacing:-0.368px;">0.51230</span>
<span class="t" style="left:709.20px;top:414.23px;font-size:12px;line-height:16px;color:#000;letter-spacing:0.046px;">Male</span>
<span class="t" style="left:939.30px;top:414.23px;font-size:12px;line-height:16px;color:#000;letter-spacing:0.046px;">Male</span>
<span class="t" style="left:879.59px;top:414.23px;font-size:12px;line-height:16px;color:#000;">84.356 %</span>
<div class="bar" style="left:809px;top:415px;width:103.4px">
<span class="t" style="left:70.59px;top:-0.77px;font-size:12px;line-height:16px;color:#fff;">84.356 %</span>
</div>
<div style="position:absolute;left:505px;top:454px;width:531px;height:1px;background:#a0a0a0;"></div>
<span class="t" style="left:508.60px;top:436.90px;font-size:11.5px;line-height:15px;color:#000;letter-spacing:-0.226px;">-1.27475</span>
<span class="t" style="left:608.90px;top:436.90px;font-size:11.5px;line-height:15px;color:#000;letter-spacing:-0.368px;">0.00000</span>
<span class="t" style="left:709.20px;top:436.23px;font-size:12px;line-height:16px;color:#000;letter-spacing:-0.336px;">Female</span>
<span class="t" style="left:939.30px;top:436.23px;font-size:12px;line-height:16px;color:#000;letter-spacing:-0.336px;">Female</span>
<span class="t" style="left:879.59px;top:436.23px;font-size:12px;line-height:16px;color:#000;">91.234 %</span>
<div class="bar" style="left:809px;top:437px;width:111.9px">
<span class="t" style="left:70.59px;top:-0.77px;font-size:12px;line-height:16px;color:#fff;">91.234 %</span>
</div>
<div style="position:absolute;left:505px;top:476px;width:531px;height:1px;background:#a0a0a0;"></div>
<span class="t" style="left:508.60px;top:458.90px;font-size:11.5px;line-height:15px;color:#000;letter-spacing:-0.226px;">-4.59815</span>
<span class="t" style="left:608.60px;top:458.90px;font-size:11.5px;line-height:15px;color:#000;letter-spacing:-0.226px;">-0.33136</span>
<span class="t" style="left:709.20px;top:458.23px;font-size:12px;line-height:16px;color:#000;letter-spacing:-0.336px;">Female</span>
<span class="t" style="left:939.30px;top:458.23px;font-size:12px;line-height:16px;color:#000;letter-spacing:-0.336px;">Female</span>
<span class="t" style="left:879.59px;top:458.23px;font-size:12px;line-height:16px;color:#000;">97.907 %</span>
<div class="bar" style="left:809px;top:459px;width:120.0px">
<span class="t" style="left:70.59px;top:-0.77px;font-size:12px;line-height:16px;color:#fff;">97.907 %</span>
</div>
<div style="position:absolute;left:505px;top:498px;width:531px;height:1px;background:#a0a0a0;"></div>
<span class="t" style="left:508.60px;top:480.90px;font-size:11.5px;line-height:15px;color:#000;letter-spacing:-0.226px;">-4.91317</span>
<span class="t" style="left:608.90px;top:480.90px;font-size:11.5px;line-height:15px;color:#000;letter-spacing:-0.368px;">0.29628</span>
<span class="t" style="left:709.20px;top:480.23px;font-size:12px;line-height:16px;color:#000;letter-spacing:-0.336px;">Female</span>
<span class="t" style="left:939.30px;top:480.23px;font-size:12px;line-height:16px;color:#000;letter-spacing:-0.336px;">Female</span>
<span class="t" style="left:879.59px;top:480.23px;font-size:12px;line-height:16px;color:#000;">84.380 %</span>
<div class="bar" style="left:809px;top:481px;width:103.4px">
<span class="t" style="left:70.59px;top:-0.77px;font-size:12px;line-height:16px;color:#fff;">84.380 %</span>
</div>
<div style="position:absolute;left:505px;top:520px;width:531px;height:1px;background:#a0a0a0;"></div>
<span class="t" style="left:508.60px;top:502.90px;font-size:11.5px;line-height:15px;color:#000;letter-spacing:-0.226px;">-4.62013</span>
<span class="t" style="left:608.90px;top:502.90px;font-size:11.5px;line-height:15px;color:#000;letter-spacing:-0.368px;">0.46565</span>
<span class="t" style="left:709.20px;top:502.23px;font-size:12px;line-height:16px;color:#000;letter-spacing:0.046px;">Male</span>
<span class="t" style="left:939.30px;top:502.23px;font-size:12px;line-height:16px;color:#000;letter-spacing:-0.336px;">Female</span>
<span class="t" style="left:879.59px;top:502.23px;font-size:12px;line-height:16px;color:#000;">73.188 %</span>
<div class="bar" style="left:809px;top:503px;width:89.7px">
<span class="t" style="left:70.59px;top:-0.77px;font-size:12px;line-height:16px;color:#fff;">73.188 %</span>
</div>
<div style="position:absolute;left:505px;top:542px;width:531px;height:1px;background:#a0a0a0;"></div>
<span class="t" style="left:508.60px;top:524.90px;font-size:11.5px;line-height:15px;color:#000;letter-spacing:-0.226px;">-5.39631</span>
<span class="t" style="left:608.60px;top:524.90px;font-size:11.5px;line-height:15px;color:#000;letter-spacing:-0.226px;">-0.58581</span>
<span class="t" style="left:709.20px;top:524.23px;font-size:12px;line-height:16px;color:#000;letter-spacing:0.046px;">Male</span>
<span class="t" style="left:939.30px;top:524.23px;font-size:12px;line-height:16px;color:#000;letter-spacing:0.046px;">Male</span>
<span class="t" style="left:879.59px;top:524.23px;font-size:12px;line-height:16px;color:#000;">99.925 %</span>
<div class="bar" style="left:809px;top:525px;width:122.5px">
<span class="t" style="left:70.59px;top:-0.77px;font-size:12px;line-height:16px;color:#fff;">99.925 %</span>
</div>
<div style="position:absolute;left:505px;top:564px;width:531px;height:1px;background:#a0a0a0;"></div>
<span class="t" style="left:508.60px;top:546.90px;font-size:11.5px;line-height:15px;color:#000;letter-spacing:-0.226px;">-0.81419</span>
<span class="t" style="left:608.90px;top:546.90px;font-size:11.5px;line-height:15px;color:#000;letter-spacing:-0.368px;">0.00000</span>
<span class="t" style="left:709.20px;top:546.23px;font-size:12px;line-height:16px;color:#000;letter-spacing:0.046px;">Male</span>
<span class="t" style="left:939.30px;top:546.23px;font-size:12px;line-height:16px;color:#000;letter-spacing:0.046px;">Male</span>
<span class="t" style="left:879.59px;top:546.23px;font-size:12px;line-height:16px;color:#000;">88.488 %</span>
<div class="bar" style="left:809px;top:547px;width:108.5px">
<span class="t" style="left:70.59px;top:-0.77px;font-size:12px;line-height:16px;color:#fff;">88.488 %</span>
</div>
<div style="position:absolute;left:505px;top:586px;width:531px;height:1px;background:#a0a0a0;"></div>
<span class="t" style="left:508.60px;top:568.90px;font-size:11.5px;line-height:15px;color:#000;letter-spacing:-0.226px;">-4.31858</span>
<span class="t" style="left:608.60px;top:568.90px;font-size:11.5px;line-height:15px;color:#000;letter-spacing:-0.226px;">-0.29157</span>
<span class="t" style="left:709.20px;top:568.23px;font-size:12px;line-height:16px;color:#000;letter-spacing:-0.336px;">Female</span>
<span class="t" style="left:939.30px;top:568.23px;font-size:12px;line-height:16px;color:#000;letter-spacing:-0.336px;">Female</span>
<span class="t" style="left:879.59px;top:568.23px;font-size:12px;line-height:16px;color:#000;">96.261 %</span>
<div class="bar" style="left:809px;top:569px;width:118.0px">
<span class="t" style="left:70.59px;top:-0.77px;font-size:12px;line-height:16px;color:#fff;">96.261 %</span>
</div>
<div style="position:absolute;left:505px;top:608px;width:531px;height:1px;background:#a0a0a0;"></div>
<span class="t" style="left:508.60px;top:590.90px;font-size:11.5px;line-height:15px;color:#000;letter-spacing:-0.226px;">-4.55950</span>
<span class="t" style="left:608.60px;top:590.90px;font-size:11.5px;line-height:15px;color:#000;letter-spacing:-0.226px;">-0.04952</span>
<span class="t" style="left:709.20px;top:590.23px;font-size:12px;line-height:16px;color:#000;letter-spacing:-0.336px;">Female</span>
<span class="t" style="left:939.30px;top:590.23px;font-size:12px;line-height:16px;color:#000;letter-spacing:-0.336px;">Female</span>
<span class="t" style="left:879.59px;top:590.23px;font-size:12px;line-height:16px;color:#000;">77.692 %</span>
<div class="bar" style="left:809px;top:591px;width:95.3px">
<span class="t" style="left:70.59px;top:-0.77px;font-size:12px;line-height:16px;color:#fff;">77.692 %</span>
</div>
<div style="position:absolute;left:505px;top:630px;width:531px;height:1px;background:#a0a0a0;"></div>
<span class="t" style="left:508.60px;top:612.90px;font-size:11.5px;line-height:15px;color:#000;letter-spacing:-0.226px;">-3.88568</span>
<span class="t" style="left:608.60px;top:612.90px;font-size:11.5px;line-height:15px;color:#000;letter-spacing:-0.226px;">-0.52251</span>
<span class="t" style="left:709.20px;top:612.23px;font-size:12px;line-height:16px;color:#000;letter-spacing:0.046px;">Male</span>
<span class="t" style="left:939.30px;top:612.23px;font-size:12px;line-height:16px;color:#000;letter-spacing:0.046px;">Male</span>
<span class="t" style="left:879.59px;top:612.23px;font-size:12px;line-height:16px;color:#000;">98.987 %</span>
<div class="bar" style="left:809px;top:613px;width:121.4px">
<span class="t" style="left:70.59px;top:-0.77px;font-size:12px;line-height:16px;color:#fff;">98.987 %</span>
</div>
<div style="position:absolute;left:505px;top:652px;width:531px;height:1px;background:#a0a0a0;"></div>
<span class="t" style="left:508.60px;top:634.90px;font-size:11.5px;line-height:15px;color:#000;letter-spacing:-0.226px;">-4.80469</span>
<span class="t" style="left:608.90px;top:634.90px;font-size:11.5px;line-height:15px;color:#000;letter-spacing:-0.368px;">0.62921</span>
<span class="t" style="left:709.20px;top:634.23px;font-size:12px;line-height:16px;color:#000;letter-spacing:0.046px;">Male</span>
<span class="t" style="left:939.30px;top:634.23px;font-size:12px;line-height:16px;color:#000;letter-spacing:-0.336px;">Female</span>
<span class="t" style="left:879.59px;top:634.23px;font-size:12px;line-height:16px;color:#000;">65.885 %</span>
<div class="bar" style="left:809px;top:635px;width:80.8px">
<span class="t" style="left:70.59px;top:-0.77px;font-size:12px;line-height:16px;color:#fff;">65.885 %</span>
</div>
<div style="position:absolute;left:505px;top:674px;width:531px;height:1px;background:#a0a0a0;"></div>
<span class="t" style="left:508.60px;top:656.90px;font-size:11.5px;line-height:15px;color:#000;letter-spacing:-0.226px;">-4.90171</span>
<span class="t" style="left:608.90px;top:656.90px;font-size:11.5px;line-height:15px;color:#000;letter-spacing:-0.368px;">0.25688</span>
<span class="t" style="left:709.20px;top:656.23px;font-size:12px;line-height:16px;color:#000;letter-spacing:0.046px;">Male</span>
<span class="t" style="left:939.30px;top:656.23px;font-size:12px;line-height:16px;color:#000;letter-spacing:-0.336px;">Female</span>
<span class="t" style="left:879.59px;top:656.23px;font-size:12px;line-height:16px;color:#000;">51.817 %</span>
<div class="bar" style="left:809px;top:657px;width:63.5px">
<span class="t" style="left:70.59px;top:-0.77px;font-size:12px;line-height:16px;color:#fff;">51.817 %</span>
</div>
<div style="position:absolute;left:505px;top:696px;width:531px;height:1px;background:#a0a0a0;"></div>
<span class="t" style="left:508.60px;top:678.90px;font-size:11.5px;line-height:15px;color:#000;letter-spacing:-0.226px;">-4.48886</span>
<span class="t" style="left:608.60px;top:678.90px;font-size:11.5px;line-height:15px;color:#000;letter-spacing:-0.226px;">-0.31399</span>
<span class="t" style="left:709.20px;top:678.23px;font-size:12px;line-height:16px;color:#000;letter-spacing:-0.336px;">Female</span>
<span class="t" style="left:939.30px;top:678.23px;font-size:12px;line-height:16px;color:#000;letter-spacing:-0.336px;">Female</span>
<span class="t" style="left:879.59px;top:678.23px;font-size:12px;line-height:16px;color:#000;">96.819 %</span>
<div class="bar" style="left:809px;top:679px;width:118.7px">
<span class="t" style="left:70.59px;top:-0.77px;font-size:12px;line-height:16px;color:#fff;">96.819 %</span>
</div>
<span class="t" style="left:508.60px;top:700.90px;font-size:11.5px;line-height:15px;color:#000;letter-spacing:-0.226px;">-4.44898</span>
<span class="t" style="left:608.60px;top:700.90px;font-size:11.5px;line-height:15px;color:#000;letter-spacing:-0.226px;">-0.16707</span>
<span class="t" style="left:709.20px;top:700.23px;font-size:12px;line-height:16px;color:#000;letter-spacing:-0.336px;">Female</span>
<span class="t" style="left:939.30px;top:700.23px;font-size:12px;line-height:16px;color:#000;letter-spacing:-0.336px;">Female</span>
<span class="t" style="left:879.59px;top:700.23px;font-size:12px;line-height:16px;color:#000;">86.821 %</span>
<div class="bar" style="left:809px;top:701px;width:106.4px">
<span class="t" style="left:70.59px;top:-0.77px;font-size:12px;line-height:16px;color:#fff;">86.821 %</span>
</div>
<div style="position:absolute;left:1071px;top:146px;width:16px;height:568px;background:linear-gradient(90deg,#e6e6e6,#f2f2f2 40%,#f5f5f5);"></div>
<div class="abs" style="left:1071px;top:164px;width:13px;height:127px;border:1px solid #8f8f8f;border-radius:2px;background:linear-gradient(90deg,#f4f4f4 0%,#e6e6e6 45%,#d2d2d2 55%,#c4c4c4 100%);box-shadow:inset 0 0 0 1px rgba(255,255,255,.6);"></div>
<svg style="left:1071px;top:146px" width="16" height="568" viewBox="0 0 16 568"><path d="M4.800 11.300h7.400l-3.700-4.300z" fill="#505050"/><path d="M4.800 557.700h7.400l-3.700 4.300z" fill="#505050"/><path d="M5 80.500h7M5 83.500h7M5 86.500h7" stroke="#666" stroke-width="1"/></svg>
</body></html>
